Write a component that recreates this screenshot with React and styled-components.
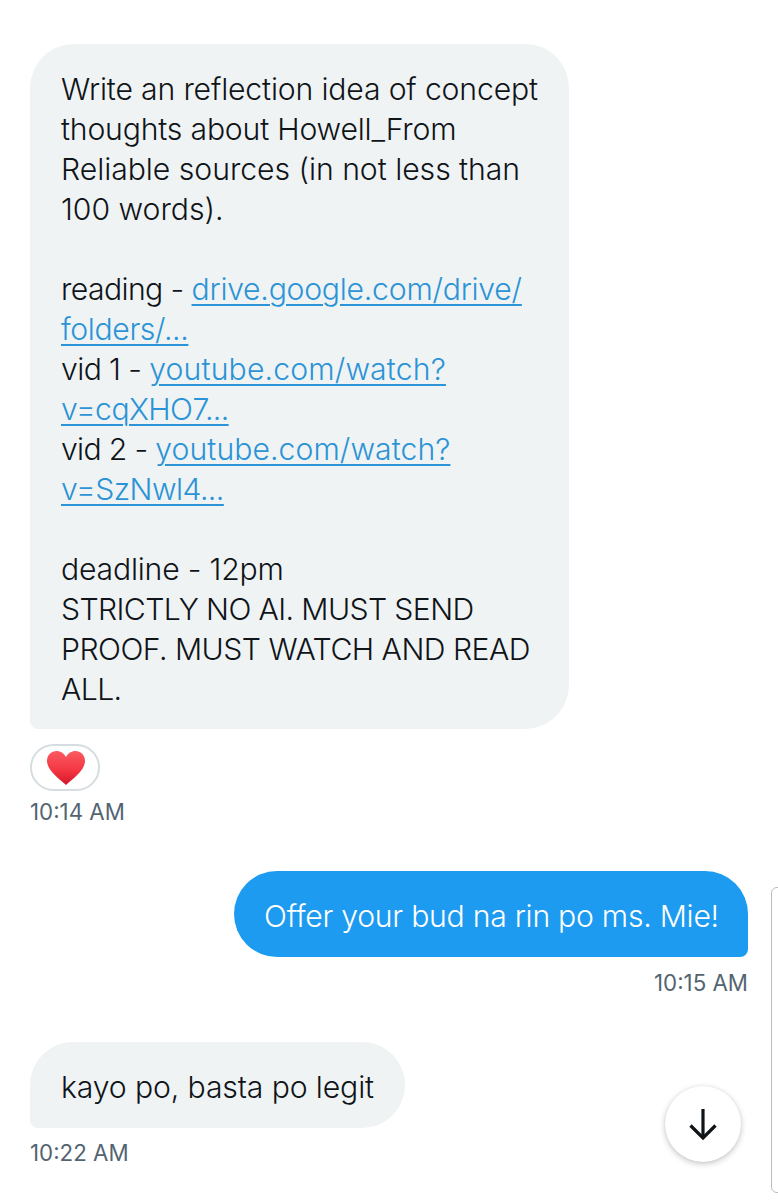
import React from "react";
import styled, { createGlobalStyle } from "styled-components";

const GlobalStyle = createGlobalStyle`
  html, body {
    margin: 0;
    padding: 0;
    background: #fff;
  }
`;

const Page = styled.div`
  position: relative;
  width: 778px;
  height: 1200px;
  overflow: hidden;
  box-sizing: border-box;
  padding: 44px 30px 0;
  display: flex;
  flex-direction: column;
  font-family: Inter, "Liberation Sans", sans-serif;
  color: #0f1419;
`;

const Bubble = styled.div`
  box-sizing: border-box;
  align-self: ${(p) => (p.$sent ? "flex-end" : "flex-start")};
  width: ${(p) => p.$width}px;
  padding: 25px 0 ${(p) => p.$bottom || 21}px ${(p) => (p.$sent ? 30 : 31)}px;
  font-size: 30.2px;
  font-weight: 350;
  line-height: 40px;
  white-space: nowrap;
  background: ${(p) => (p.$sent ? "#1d9bf0" : "#eff3f4")};
  color: ${(p) => (p.$sent ? "#fff" : "#0f1419")};
  border-radius: ${(p) => (p.$sent ? "44px 44px 8px 44px" : "44px 44px 44px 8px")};
`;

const Line = styled.div`
  min-height: 40px;
  letter-spacing: ${(p) => p.$track ?? -0.3}px;
`;

const Link = styled.span`
  color: #2b93d6;
  letter-spacing: ${(p) => p.$track ?? -0.3}px;
  text-decoration: underline;
  text-decoration-thickness: 2px;
  text-underline-offset: 4px;
`;

const Reaction = styled.div`
  box-sizing: border-box;
  width: 70px;
  height: 47px;
  margin-top: 15px;
  padding-left: 2px;
  border: 2px solid #d5dde0;
  border-radius: 24px;
  display: flex;
  align-items: center;
  justify-content: center;
`;

const Time = styled.div`
  align-self: ${(p) => (p.$sent ? "flex-end" : "flex-start")};
  margin-top: ${(p) => p.$top}px;
  font-size: 22.3px;
  line-height: 26px;
  color: #536471;
`;

const Spacer = styled.div`
  height: ${(p) => p.$height}px;
  flex: none;
`;

const ScrollButton = styled.div`
  position: absolute;
  left: 665px;
  top: 1086px;
  width: 76px;
  height: 76px;
  border-radius: 50%;
  background: #fff;
  box-shadow: 0 2px 6px rgba(0, 0, 0, 0.22), 0 0 3px rgba(0, 0, 0, 0.06);
  display: flex;
  align-items: center;
  justify-content: center;
`;

const EdgeBracket = styled.div`
  position: absolute;
  left: 771px;
  top: 887px;
  width: 20px;
  height: 306px;
  box-sizing: border-box;
  border: 1px solid #b9bdc0;
  border-radius: 6px;
`;

const Heart = () => (
  <svg width="40" height="36" viewBox="0 0 40 36">
    <defs>
      <linearGradient id="heartFill" x1="0" y1="0" x2="0" y2="1">
        <stop offset="0" stopColor="#fb5a62" />
        <stop offset="0.6" stopColor="#f23440" />
        <stop offset="1" stopColor="#d3152a" />
      </linearGradient>
    </defs>
    <path
      d="M20 35 C15 30 1 21 1 11 C1 4.500 5.800 1 10.500 1 C14.500 1 18 3.200 20 7 C22 3.200 25.500 1 29.500 1 C34.200 1 39 4.500 39 11 C39 21 25 30 20 35 Z"
      fill="url(#heartFill)"
    />
  </svg>
);

const ArrowDown = () => (
  <svg width="32" height="34" viewBox="0 0 32 34" fill="none" stroke="#0f1419" strokeWidth="3.2">
    <path d="M16 2 V31" />
    <path d="M3.500 18.500 L16 31 L28.500 18.500" />
  </svg>
);

export default function App() {
  return (
    <Page>
      <GlobalStyle />
      <Bubble $width={539} $bottom={20}>
        <Line $track={-0.17}>Write an reflection idea of concept</Line>
        <Line $track={-0.19}>thoughts about Howell_From</Line>
        <Line $track={-0.04}>Reliable sources (in not less than</Line>
        <Line $track={-0.03}>100 words).</Line>
        <Line />
        <Line $track={-0.6}>
          reading - <Link $track={-0.25}>drive.google.com/drive/</Link>
        </Line>
        <Line>
          <Link $track={-0.38}>folders/...</Link>
        </Line>
        <Line $track={-0.6}>
          vid 1 - <Link $track={0.14}>youtube.com/watch?</Link>
        </Line>
        <Line>
          <Link $track={-0.6}>v=cqXHO7...</Link>
        </Line>
        <Line $track={-0.67}>
          vid 2 - <Link $track={0.05}>youtube.com/watch?</Link>
        </Line>
        <Line>
          <Link $track={-0.55}>v=SzNwl4...</Link>
        </Line>
        <Line />
        <Line $track={-0.2}>deadline - 12pm</Line>
        <Line $track={-0.62}>STRICTLY NO AI. MUST SEND</Line>
        <Line $track={-0.53}>PROOF. MUST WATCH AND READ</Line>
        <Line $track={-0.6}>ALL.</Line>
      </Bubble>
      <Reaction>
        <Heart />
      </Reaction>
      <Time $top={8}>10:14 AM</Time>
      <Spacer $height={46} />
      <Bubble $sent $width={514}>
        <Line $track={-0.27}>Offer your bud na rin po ms. Mie!</Line>
      </Bubble>
      <Time $sent $top={13}>10:15 AM</Time>
      <Spacer $height={46} />
      <Bubble $width={375}>
        <Line $track={-0.13}>kayo po, basta po legit</Line>
      </Bubble>
      <Time $top={12}>10:22 AM</Time>
      <ScrollButton>
        <ArrowDown />
      </ScrollButton>
      <EdgeBracket />
    </Page>
  );
}
